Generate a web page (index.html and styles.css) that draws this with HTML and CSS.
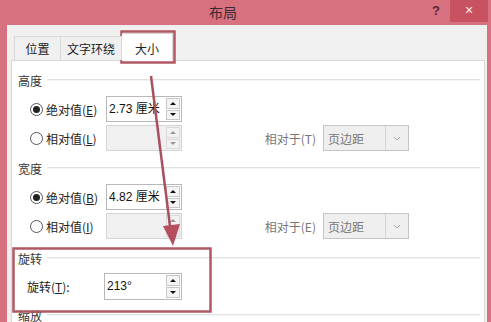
FILE: index.html
```html
<!DOCTYPE html>
<html lang="zh">
<head>
<meta charset="utf-8">
<title>布局</title>
<link rel="stylesheet" href="styles.css">
</head>
<body>
<div class="window">
  <div class="titlebar">
    <div class="title">布局</div>
    <div class="help">?</div>
    <div class="close">✕</div>
  </div>
  <div class="dialog">
    <div class="tabs">
      <div class="tab t1">位置</div>
      <div class="tab t2">文字环绕</div>
      <div class="tab t3 active">大小</div>
    </div>
    <div class="panel">
      <div class="heading"><span>高度</span><i class="rule"></i></div>
      <div class="row first">
        <div class="opt"><span class="radio on"></span><span>绝对值(<u>E</u>)</span></div>
        <div class="field"><span class="val">2.73 厘米</span><span class="spin"><b class="up"></b><b class="down"></b></span></div>
      </div>
      <div class="row">
        <div class="opt"><span class="radio"></span><span>相对值(<u>L</u>)</span></div>
        <div class="field off"><span class="val"></span><span class="spin"><b class="up"></b><b class="down"></b></span></div>
        <div class="rel">相对于(T)</div>
        <div class="select"><span>页边距</span><span class="drop"><svg width="8" height="5" viewBox="0 0 8 5"><path d="M1 1 L4 4 L7 1" fill="none" stroke="#aaa" stroke-width="1"/></svg></span></div>
      </div>

      <div class="heading h2"><span>宽度</span><i class="rule"></i></div>
      <div class="row first">
        <div class="opt"><span class="radio on"></span><span>绝对值(<u>B</u>)</span></div>
        <div class="field"><span class="val">4.82 厘米</span><span class="spin"><b class="up"></b><b class="down"></b></span></div>
      </div>
      <div class="row">
        <div class="opt"><span class="radio"></span><span>相对值(<u>I</u>)</span></div>
        <div class="field off"><span class="val"></span><span class="spin"><b class="up"></b><b class="down"></b></span></div>
        <div class="rel">相对于(E)</div>
        <div class="select"><span>页边距</span><span class="drop"><svg width="8" height="5" viewBox="0 0 8 5"><path d="M1 1 L4 4 L7 1" fill="none" stroke="#aaa" stroke-width="1"/></svg></span></div>
      </div>

      <div class="heading h3"><span>旋转</span><i class="rule"></i></div>
      <div class="row rot">
        <div class="optr">旋转(<u>T</u>):</div>
        <div class="field wide"><span class="val">213°</span><span class="spin"><b class="up"></b><b class="down"></b></span></div>
      </div>

      <div class="heading h4"><span>缩放</span><i class="rule"></i></div>
    </div>
  </div>
</div>
<svg class="overlay" width="491" height="322" viewBox="0 0 491 322">
  <rect x="121.5" y="31.5" width="53" height="31" fill="none" stroke="#b25864" stroke-width="2.5"/>
  <rect x="13.5" y="248.5" width="197" height="63" fill="none" stroke="#b25864" stroke-width="2.5"/>
  <line x1="151" y1="76" x2="170.5" y2="230" stroke="#a9505c" stroke-width="2.5"/>
  <path d="M163 226 L180 224 L173 246 Z" fill="#b54f5e"/>
</svg>
</body>
</html>
```
FILE: styles.css
```css
html, body {
  margin: 0;
  padding: 0;
}
body {
  width: 491px;
  height: 322px;
  overflow: hidden;
  background: #d8717f;
  font-family: "Noto Sans CJK SC", "Noto Sans", sans-serif;
  font-size: 12px;
  color: #222;
  position: relative;
}
.window {
  display: flex;
  flex-direction: column;
  height: 322px;
}
.titlebar {
  height: 25px;
  display: flex;
  align-items: flex-start;
  flex: none;
}
.title {
  flex: 1;
  text-align: center;
  font-size: 14px;
  line-height: 24px;
  color: #3a2a2e;
  padding-left: 14px;
}
.help {
  width: 12px;
  font-family: "Liberation Sans", sans-serif;
  font-weight: bold;
  font-size: 13px;
  line-height: 22px;
  color: #5a2838;
  margin-right: 6px;
}
.close {
  width: 38px;
  height: 22px;
  background: #c8525f;
  color: #f6e6e8;
  text-align: center;
  line-height: 22px;
  font-size: 11px;
  font-family: "DejaVu Sans", sans-serif;
  margin-right: 3px;
}
.dialog {
  flex: 1;
  margin: 0 4px 0 7px;
  background: #f0f0f0;
  padding: 6px 2px 0 4px;
  display: flex;
  flex-direction: column;
}
.tabs {
  display: flex;
  align-items: flex-end;
  height: 29px;
  padding-left: 3px;
  position: relative;
  z-index: 1;
}
.tab {
  height: 24px;
  line-height: 24px;
  text-align: center;
  border: 1px solid #d9d9d9;
  border-bottom: none;
  box-sizing: border-box;
  background: #f0f0f0;
  font-size: 12px;
  color: #222;
}
.t1 { width: 47px; }
.t2 { width: 61px; border-left: none; }
.t3 {
  width: 51px;
  height: 28px;
  line-height: 30px;
  background: #fff;
  border-left: none;
  margin-bottom: -1px;
}
.panel {
  flex: 1;
  background: #fff;
  border: 1px solid #d9d9d9;
  border-bottom: none;
  padding: 9px 4px 0 6px;
  display: flex;
  flex-direction: column;
}
.heading {
  height: 20px;
  display: flex;
  align-items: center;
  font-size: 12px;
  color: #333;
}
.heading span { margin-right: 5px; }
.rule {
  flex: 1;
  height: 0;
  border-top: 1px solid #e2e2e2;
  border-bottom: 1px solid #f4f4f4;
}
.h2 { margin-top: 7px; }
.h3 { margin-top: 9px; }
.h4 { margin-top: 5px; }
.row {
  height: 26px;
  display: flex;
  align-items: center;
  margin-top: 3px;
}
.row.first { margin-top: 6px; }
.row.rot { margin-top: 5px; height: 27px; }
.opt {
  width: 76px;
  padding-left: 12px;
  display: flex;
  align-items: center;
  gap: 3px;
  flex: none;
  font-size: 12px;
}
.optr {
  width: 86px;
  padding-left: 9px;
  flex: none;
  box-sizing: border-box;
  font-size: 12px;
}
.radio {
  width: 11px;
  height: 11px;
  border: 1px solid #555;
  border-radius: 50%;
  background: #fff;
  display: inline-flex;
  align-items: center;
  justify-content: center;
  flex: none;
}
.radio.on::after {
  content: "";
  width: 7px;
  height: 7px;
  border-radius: 50%;
  background: #222;
}
.field {
  width: 76px;
  height: 26px;
  box-sizing: border-box;
  border: 1px solid #b8b8b8;
  background: #fff;
  display: flex;
  flex: none;
}
.field.wide { width: 78px; height: 27px; }
.field.off {
  background: #f0f0f0;
  border-color: #d4d4d4;
}
.val {
  flex: 1;
  padding-left: 2px;
  font-family: "Liberation Sans", "Noto Sans CJK SC", sans-serif;
  font-size: 12px;
  line-height: 24px;
  color: #111;
  white-space: nowrap;
  overflow: hidden;
}
.spin {
  width: 14px;
  margin: 1px 1px 1px 0;
  display: flex;
  flex-direction: column;
  gap: 1px;
  flex: none;
}
.spin b {
  flex: 1;
  border: 1px solid #c8c8c8;
  background: #f4f4f4;
  display: flex;
  align-items: center;
  justify-content: center;
}
.spin b::after {
  content: "";
  width: 0;
  height: 0;
  border-left: 3px solid transparent;
  border-right: 3px solid transparent;
}
.spin .up::after { border-bottom: 3px solid #111; }
.spin .down::after { border-top: 3px solid #111; }
.field.off .spin b { background: #f2f2f2; border-color: #dadada; }
.field.off .spin .up::after { border-bottom-color: #999; }
.field.off .spin .down::after { border-top-color: #999; }
.rel {
  width: 141px;
  text-align: right;
  padding-right: 7px;
  box-sizing: border-box;
  color: #777;
  font-size: 12px;
  flex: none;
}
.select {
  width: 86px;
  height: 26px;
  box-sizing: border-box;
  border: 1px solid #c4c4c4;
  background: #efefef;
  display: flex;
  align-items: center;
  color: #777;
  font-size: 12px;
  flex: none;
}
.select span:first-child {
  flex: 1;
  padding-left: 4px;
}
.drop {
  width: 22px;
  height: 24px;
  border-left: 1px solid #d4d4d4;
  display: flex;
  align-items: center;
  justify-content: center;
}
.overlay {
  position: absolute;
  left: 0;
  top: 0;
  pointer-events: none;
}
```
